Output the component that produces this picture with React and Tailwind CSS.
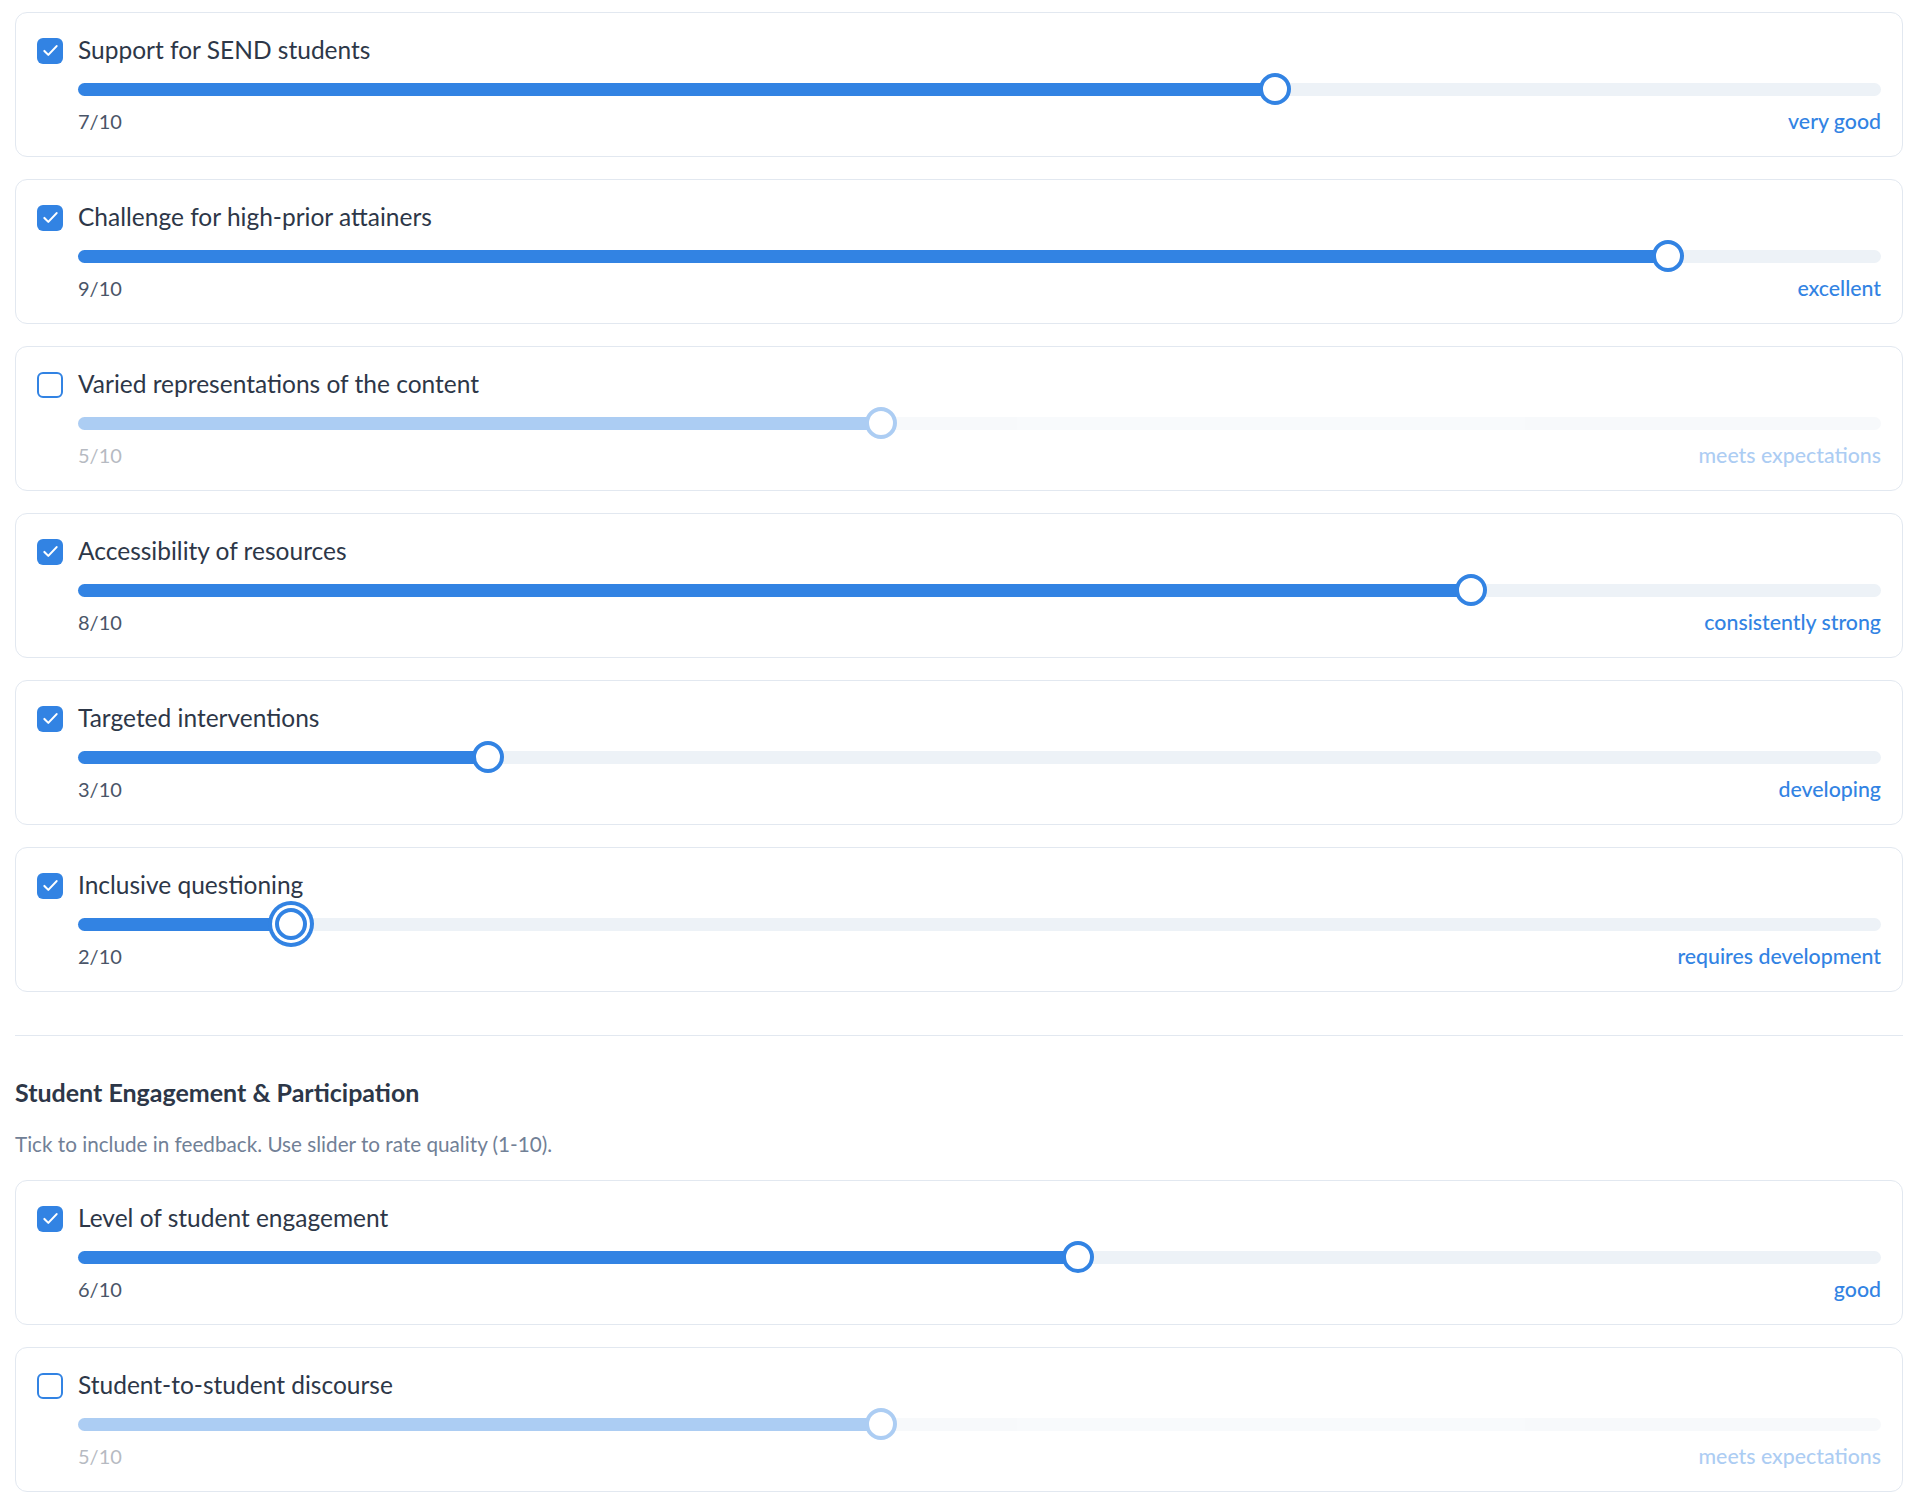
import React from "react";

const groupOne = [
  { label: "Support for SEND students", value: 7, text: "very good", on: true },
  { label: "Challenge for high-prior attainers", value: 9, text: "excellent", on: true },
  { label: "Varied representations of the content", value: 5, text: "meets expectations", on: false },
  { label: "Accessibility of resources", value: 8, text: "consistently strong", on: true },
  { label: "Targeted interventions", value: 3, text: "developing", on: true },
  { label: "Inclusive questioning", value: 2, text: "requires development", on: true, focus: true },
];

const groupTwo = [
  { label: "Level of student engagement", value: 6, text: "good", on: true },
  { label: "Student-to-student discourse", value: 5, text: "meets expectations", on: false },
];

function Checkbox({ on }) {
  if (on) {
    return (
      <span className="flex h-[26px] w-[26px] shrink-0 items-center justify-center rounded-[6px] bg-[#3283e3]">
        <svg width="21" height="21" viewBox="0 0 24 24" fill="none">
          <path d="M5 12.5l4.5 4.5L19 7" stroke="white" strokeWidth="2.4" strokeLinecap="round" strokeLinejoin="round" />
        </svg>
      </span>
    );
  }
  return <span className="block h-[26px] w-[26px] shrink-0 rounded-[6px] border-2 border-[#3283e3] bg-white" />;
}

function Slider({ value, focus }) {
  const f = (value - 1) / 9;
  const pos = `calc(16px + ${f} * (100% - 32px))`;
  return (
    <div className="relative ml-[41px] mt-[6px] flex h-[32px] items-center">
      <div className="relative h-[13px] w-full rounded-full bg-[#edf2f7]">
        <div className="absolute left-0 top-0 h-full rounded-full bg-[#3283e3]" style={{ width: pos }} />
      </div>
      <div
        className={
          focus
            ? "absolute top-0 h-[32px] w-[32px] -translate-x-1/2 rounded-full border-[4px] border-[#3283e3] bg-white shadow-[0_0_0_3px_#ffffff,0_0_0_7px_#3283e3]"
            : "absolute top-0 h-[32px] w-[32px] -translate-x-1/2 rounded-full border-[4px] border-[#3283e3] bg-white"
        }
        style={{ left: pos }}
      />
    </div>
  );
}

function Card({ item }) {
  return (
    <div className="h-[145px] rounded-[12px] border border-[#e2e8f0] bg-white p-[21px]">
      <div className="flex h-[33px] items-center gap-[15px]">
        <Checkbox on={item.on} />
        <span className="-mt-[2px] text-[24.5px] leading-[33px] text-[#2d3748]">{item.label}</span>
      </div>
      <div className={item.on ? "" : "opacity-40"}>
        <Slider value={item.value} focus={item.focus} />
        <div className="ml-[41px] mt-[4px] flex h-[25px] items-center justify-between leading-[25px]">
          <span className="text-[20px] text-[#4a5568]">{item.value}/10</span>
          <span className="text-[21.3px] font-medium text-[#3283e3]">{item.text}</span>
        </div>
      </div>
    </div>
  );
}

export default function App() {
  return (
    <div
      className="min-h-[1499px] bg-white pl-[15px] pr-[17px] pt-[12px]"
      style={{ fontFamily: "Lato, 'Open Sans', 'Noto Sans', sans-serif" }}
    >
      <div className="flex flex-col gap-[22px]">
        {groupOne.map((it) => (
          <Card key={it.label} item={it} />
        ))}
      </div>
      <div className="mt-[43px] h-px bg-[#e2e8f0]" />
      <h2 className="mt-[40px] text-[25px] font-bold leading-[32px] text-[#2d3748]">
        Student Engagement &amp; Participation
      </h2>
      <p className="mt-[22px] text-[20.7px] leading-[28px] text-[#718096]">
        Tick to include in feedback. Use slider to rate quality (1-10).
      </p>
      <div className="mt-[22px] flex flex-col gap-[22px]">
        {groupTwo.map((it) => (
          <Card key={it.label} item={it} />
        ))}
      </div>
    </div>
  );
}
